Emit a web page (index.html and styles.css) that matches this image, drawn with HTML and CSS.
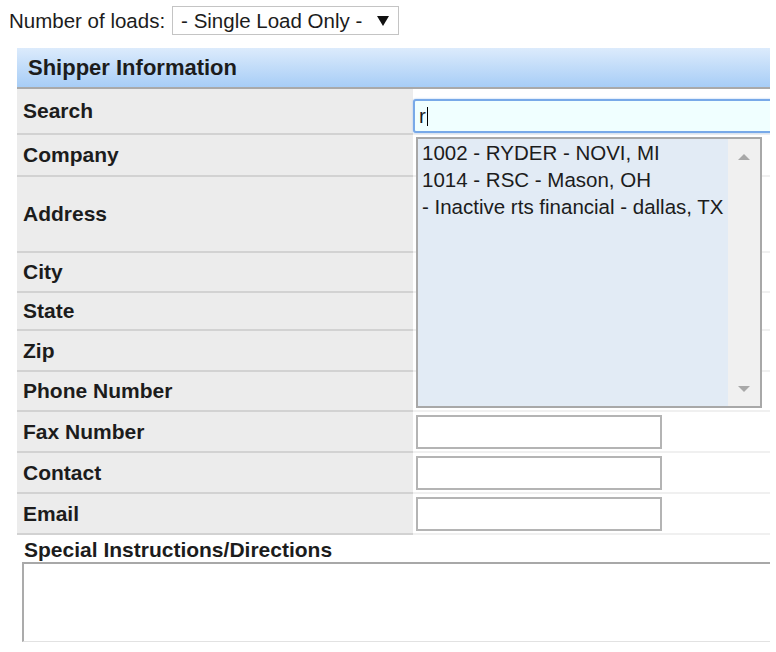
FILE: index.html
```html
<!DOCTYPE html>
<html lang="en">
<head>
    <meta charset="UTF-8">
    <meta name="viewport" content="width=device-width, initial-scale=1.0">
    <title>Shipper Information</title>
    <link rel="stylesheet" href="styles.css">
</head>
<body>
    <div class="loads">
        <span class="loads-label">Number of loads:</span>
        <div class="select">
            <span>- Single Load Only -</span>
            <span class="select-arrow"></span>
        </div>
    </div>

    <div class="panel">
        <div class="panel-head">Shipper Information</div>

        <div class="row row-search">
            <div class="label">Search</div>
            <div class="value">
                <div class="search-field">r<span class="caret"></span></div>
                <div class="suggest">
                    <ul class="suggest-list">
                        <li>1002 - RYDER - NOVI, MI</li>
                        <li>1014 - RSC - Mason, OH</li>
                        <li>- Inactive rts financial - dallas, TX</li>
                    </ul>
                    <div class="suggest-scroll">
                        <span class="arrow-up"></span>
                        <span class="arrow-down"></span>
                    </div>
                </div>
            </div>
        </div>
        <div class="row row-company">
            <div class="label">Company</div>
            <div class="value"></div>
        </div>
        <div class="row row-address">
            <div class="label">Address</div>
            <div class="value"></div>
        </div>
        <div class="row row-city">
            <div class="label">City</div>
            <div class="value"></div>
        </div>
        <div class="row row-state">
            <div class="label">State</div>
            <div class="value"></div>
        </div>
        <div class="row">
            <div class="label">Zip</div>
            <div class="value"></div>
        </div>
        <div class="row row-phone">
            <div class="label">Phone Number</div>
            <div class="value"></div>
        </div>
        <div class="row">
            <div class="label">Fax Number</div>
            <div class="value"><input type="text" class="field"></div>
        </div>
        <div class="row">
            <div class="label">Contact</div>
            <div class="value"><input type="text" class="field"></div>
        </div>
        <div class="row">
            <div class="label">Email</div>
            <div class="value"><input type="text" class="field"></div>
        </div>

        <div class="special">
            <div class="special-label">Special Instructions/Directions</div>
            <textarea class="special-text"></textarea>
        </div>
    </div>
</body>
</html>
```

FILE: styles.css
```css
body {
    margin: 0;
    font-family: "Liberation Sans", Arial, sans-serif;
    font-size: 20.5px;
    color: #1c1c1c;
    background: #fff;
    overflow: hidden;
}
.loads {
    display: flex;
    align-items: center;
    gap: 7px;
    padding: 6px 0 0 9px;
}
.select {
    display: flex;
    align-items: center;
    justify-content: space-between;
    box-sizing: border-box;
    width: 227px;
    height: 29px;
    padding: 0 9px 0 8px;
    border: 1px solid #c4c4c4;
    background: #fff;
}
.select-arrow {
    width: 0;
    height: 0;
    border-left: 6px solid transparent;
    border-right: 6px solid transparent;
    border-top: 10px solid #111;
}
.panel {
    width: 753px;
    margin: 13px 0 0 17px;
    overflow: hidden;
}
.panel-head {
    height: 39px;
    line-height: 39px;
    padding-left: 11px;
    font-size: 22px;
    font-weight: bold;
    background: linear-gradient(#dcebfc, #a7cdf6);
    border-bottom: 2px solid #a9a9a9;
}
.row {
    display: flex;
    height: 41px;
}
.row-search { height: 46px; }
.row-company { height: 42px; }
.row-address { height: 76px; }
.row-city { height: 40px; }
.row-state { height: 38px; }
.row-phone { height: 40px; }
.label {
    flex: none;
    display: flex;
    align-items: center;
    box-sizing: border-box;
    width: 396px;
    padding-left: 6px;
    font-size: 21px;
    font-weight: bold;
    background: #ececec;
    border-bottom: 2px solid #d2d2d2;
}
.value {
    flex: 1;
    min-width: 0;
    box-sizing: border-box;
    padding: 3px 0 0 3px;
    border-bottom: 2px solid #f0f0f0;
}
.row-search .value {
    position: relative;
    padding: 10px 0 0 0;
}
.search-field {
    box-sizing: border-box;
    width: 420px;
    height: 34px;
    line-height: 30px;
    padding-left: 4px;
    background: #f0ffff;
    border: 2px solid #78a9e8;
    border-radius: 3px;
    box-shadow: 0 0 2px #9ec3f0;
}
.caret {
    display: inline-block;
    width: 1px;
    height: 19px;
    margin-left: 1px;
    vertical-align: -3px;
    background: #000;
}
.suggest {
    position: absolute;
    top: 48px;
    left: 3px;
    z-index: 1;
    display: flex;
    box-sizing: border-box;
    width: 346px;
    height: 271px;
    border: 2px solid #a8a8a8;
}
.suggest-list {
    flex: 1;
    margin: 0;
    padding: 0 0 0 4px;
    list-style: none;
    line-height: 27px;
    background: #e2ebf5;
}
.suggest-scroll {
    display: flex;
    flex-direction: column;
    justify-content: space-between;
    align-items: center;
    width: 32px;
    padding: 15px 0 14px;
    box-sizing: border-box;
    background: #f0f0f0;
}
.arrow-up,
.arrow-down {
    width: 0;
    height: 0;
    border-left: 6px solid transparent;
    border-right: 6px solid transparent;
}
.arrow-up {
    border-bottom: 6px solid #a8a8a8;
}
.arrow-down {
    border-top: 6px solid #a8a8a8;
}
.field {
    box-sizing: border-box;
    width: 246px;
    height: 34px;
    margin: 0;
    border: 2px solid #b4b4b4;
    background: #fff;
}
.special {
    padding: 4px 0 0 5px;
}
.special-label {
    padding-left: 2px;
    line-height: 22px;
    font-size: 21px;
    font-weight: bold;
}
.special-text {
    display: block;
    box-sizing: border-box;
    width: 800px;
    height: 80px;
    margin: 1px 0 0;
    border-style: solid;
    border-width: 2px 0 1px 2px;
    border-color: #a8a8a8 #e2e2e2 #e2e2e2 #ababab;
    resize: none;
}
```
